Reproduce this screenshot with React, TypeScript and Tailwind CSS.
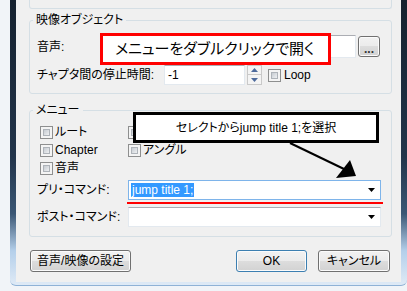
import React from 'react';

// Win7-style dialog: 映像オブジェクト / メニュー settings, with red annotation overlays

const Check = () => (
    <span className="inline-flex w-[13px] h-[13px] shrink-0 border border-[#8e8f8f] bg-[#f4f4f4] p-[2px]">
        <span className="flex-1 border border-[#aeb3b9] bg-[linear-gradient(135deg,#c6cbd1,#eef0f2)]" />
    </span>
);

const DropArrow = () => (
    <svg width="7" height="4" viewBox="0 0 7 4" className="shrink-0">
        <path d="M0 0h7L3.5 4z" fill="#000" />
    </svg>
);

const Combo: React.FC<{ focused?: boolean; children?: React.ReactNode }> = ({ focused, children }) => (
    <div
        className={
            focused
                ? 'flex-1 h-full flex items-center bg-white border border-[#7eb4ea] pl-[2px] pr-[5px]'
                : 'flex-1 h-full flex items-center bg-white border border-[#e3e9ef] border-t-[#abadb3] pl-[2px] pr-[5px]'
        }
    >
        <div className="flex-1 flex">{children}</div>
        <DropArrow />
    </div>
);

const Btn: React.FC<{ className?: string; children: React.ReactNode }> = ({ className, children }) => (
    <button
        type="button"
        className={`h-full rounded-[3px] border border-[#707070] bg-[linear-gradient(to_bottom,#f2f2f2_0%,#ebebeb_50%,#dddddd_50%,#d2d2d2_100%)] shadow-[inset_0_0_0_1px_#fbfbfb] flex items-center justify-center ${className ?? ''}`}
    >
        {children}
    </button>
);

export default function App() {
    return (
        <div className="relative w-[407px] h-[291px] overflow-hidden bg-[#f1f4f8] text-[12px] leading-[14px] text-black font-['Liberation_Sans','Noto_Sans_CJK_JP',sans-serif] [font-feature-settings:'palt']">
            {/* window frame */}
            <div className="ml-[10px] w-[397px] h-[286px] rounded-b-[6px] pl-[6px] pr-[6px] pb-[3px] border-b border-[#8fb2d6] bg-[linear-gradient(to_bottom,#15212e_0%,#22344a_55%,#3b5775_75%,#b4cfea_88%,#dfeaf6_100%)] flex">
                <div className="flex-1 bg-[#f0f0f0] flex flex-col">
                    {/* tail of the previous group box */}
                    <div className="ml-[13px] mr-[9px] h-[9px] border border-t-0 border-[#d5dfe5] rounded-b-[3px]" />

                    <fieldset className="mt-[4px] ml-[13px] mr-[9px] border border-[#d5dfe5] rounded-[3px] pl-[7px] pr-[10px] pt-[8px] pb-[8px]">
                        <legend className="-ml-[4px] px-[3px] leading-[14px]">映像オブジェクト</legend>
                        <div className="flex items-center h-[23px]">
                            <span className="w-[127px]">音声:</span>
                            <div className="w-[192px] h-full bg-white border border-[#e3e9ef] border-t-[#abadb3]" />
                            <Btn className="ml-[2px] w-[22px] !h-[21px] font-bold text-[#333] pt-[4px]">...</Btn>
                        </div>
                        <div className="mt-[7px] flex items-center h-[20px]">
                            <span className="w-[127px]">チャプタ間の停止時間:</span>
                            <div className="w-[81px] h-full bg-white border border-[#e3e9ef] border-t-[#abadb3] pl-[3px] flex items-center">-1</div>
                            <div className="ml-[2px] w-[15px] h-full flex flex-col">
                                <span className="h-[10px] border border-[#c9c9c9] bg-[#f4f4f4] flex items-center justify-center">
                                    <svg width="7" height="4" viewBox="0 0 7 4"><path d="M0 4h7L3.5 0z" fill="#4d6a9c" /></svg>
                                </span>
                                <span className="h-[10px] border border-t-0 border-[#c9c9c9] bg-[#f4f4f4] flex items-center justify-center">
                                    <svg width="7" height="4" viewBox="0 0 7 4"><path d="M0 0h7L3.5 4z" fill="#4d6a9c" /></svg>
                                </span>
                            </div>
                            <div className="ml-[6px] flex items-center gap-[3px]">
                                <Check />
                                <span>Loop</span>
                            </div>
                        </div>
                    </fieldset>

                    <fieldset className="mt-[9px] ml-[13px] mr-[9px] border border-[#d5dfe5] rounded-[3px] pl-[7px] pr-[10px] pt-[6px] pb-[9px]">
                        <legend className="-ml-[4px] px-[3px] leading-[14px]">メニュー</legend>
                        <div className="grid grid-cols-[91px_1fr]">
                            <div className="h-[18px] pl-[3px] flex items-center gap-[2px]"><Check /><span>ルート</span></div>
                            <div className="h-[18px] flex items-center gap-[2px]"><Check /><span>字幕</span></div>
                            <div className="h-[18px] pl-[3px] flex items-center gap-[2px]"><Check /><span>Chapter</span></div>
                            <div className="h-[18px] flex items-center gap-[2px]"><Check /><span>アングル</span></div>
                            <div className="h-[18px] pl-[3px] flex items-center gap-[2px]"><Check /><span>音声</span></div>
                            <div />
                        </div>
                        <div className="mt-[3px] flex items-center h-[20px]">
                            <span className="w-[91px]">プリ・コマンド:</span>
                            <Combo focused>
                                <span className="bg-[#3399ff] text-white px-[1px]">jump title 1;</span>
                            </Combo>
                        </div>
                        <div className="mt-[7px] flex items-center h-[20px]">
                            <span className="w-[91px]">ポスト・コマンド:</span>
                            <Combo />
                        </div>
                    </fieldset>

                    <div className="mt-[13px] h-[22px] flex pl-[14px] pr-[11px]">
                        <Btn className="w-[101px]">音声/映像の設定</Btn>
                        <Btn className="ml-auto w-[71px] !border-[#3c7fb1] shadow-[inset_0_0_0_1px_#9fdcf7]">OK</Btn>
                        <Btn className="ml-[11px] w-[72px]">キャンセル</Btn>
                    </div>
                </div>
            </div>

            {/* annotations */}
            <div className="absolute left-[100px] top-[33px] w-[231px] h-[32px] border-[3px] border-[#ff0000] bg-white pl-[12px] flex items-center text-[15px] leading-[18px]">
                メニューをダブルクリックで開く
            </div>
            <div className="absolute left-[127px] top-[202px] w-[256px] h-[2px] bg-[#ff0000]" />
            <div className="absolute left-[133px] top-[112px] w-[246px] h-[31px] border-[3px] border-black bg-white flex items-center justify-center">
                セレクトからjump title 1;を選択
            </div>
            <svg className="absolute left-[280px] top-[140px]" width="80" height="42" viewBox="280 140 80 42">
                <line x1="290" y1="143" x2="344" y2="169" stroke="#000" strokeWidth="2" />
                <polygon points="350,160 336,178 356,176" fill="#000" />
            </svg>
        </div>
    );
}
